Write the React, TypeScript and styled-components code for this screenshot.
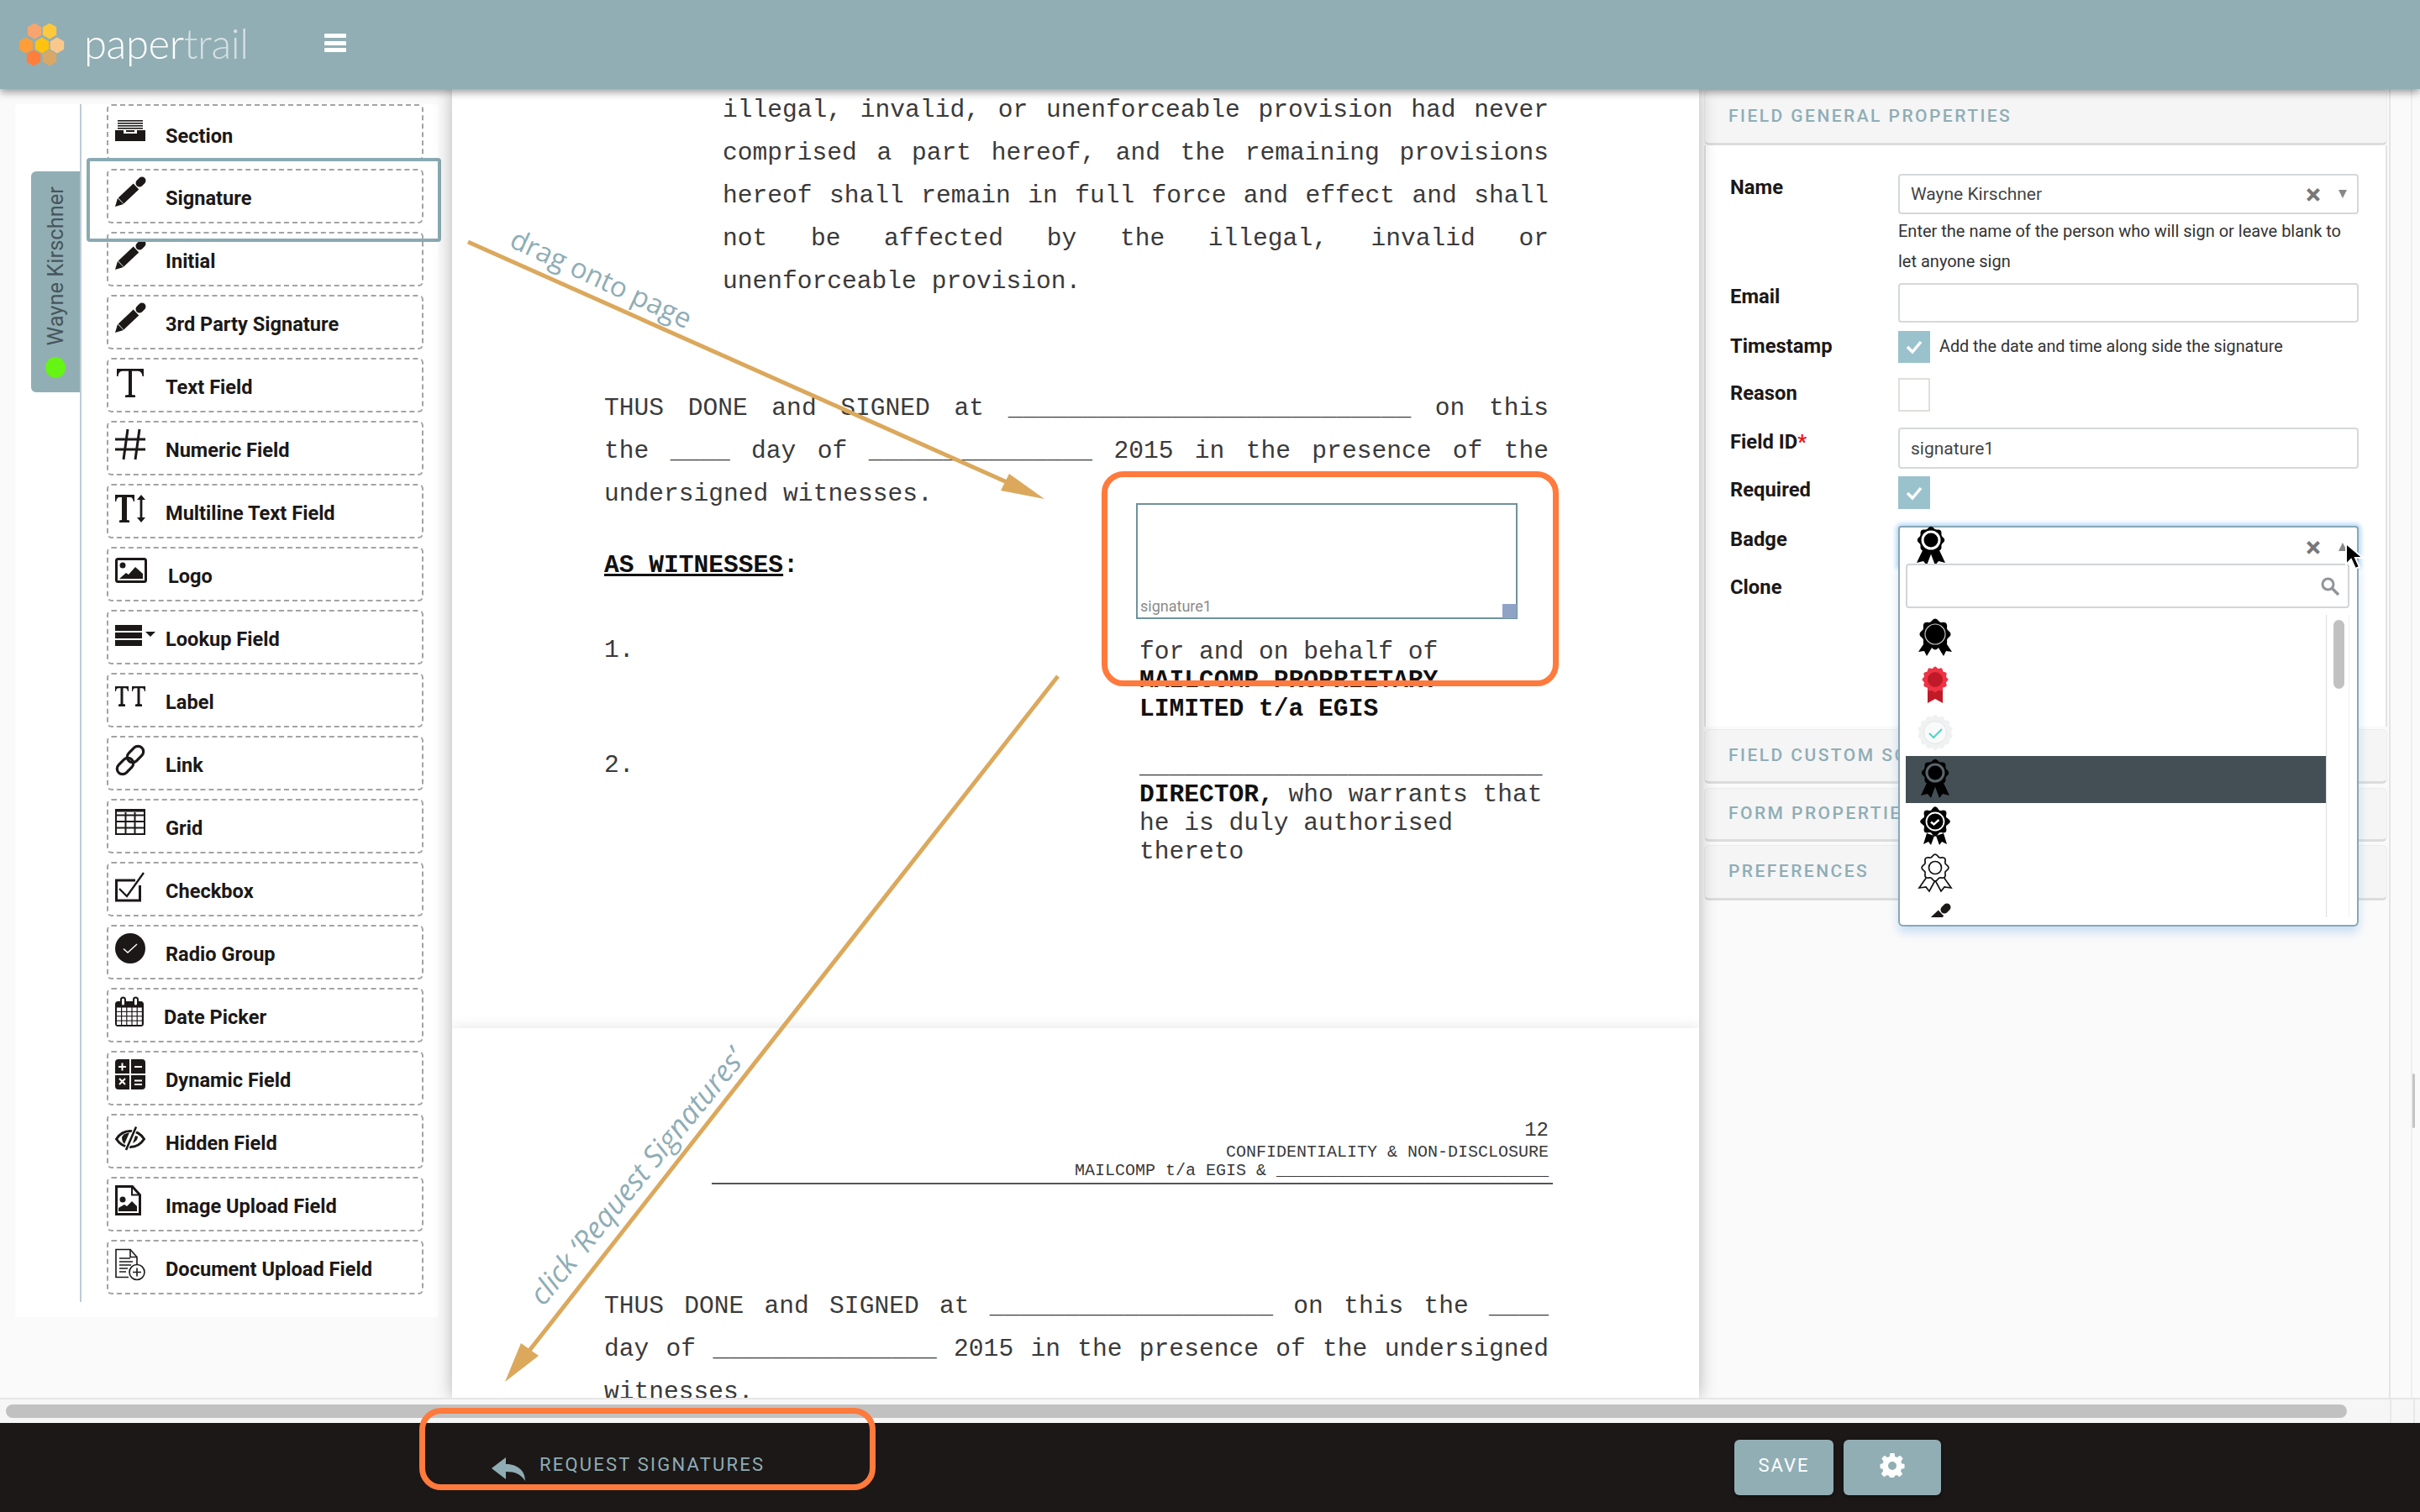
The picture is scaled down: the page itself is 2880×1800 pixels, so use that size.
import React from "react";
import styled, { createGlobalStyle } from "styled-components";

const Global = createGlobalStyle`
  html, body { margin: 0; padding: 0; background: #fafafa; }
  #root { width: 2880px; height: 1800px; overflow: hidden; }
  * { box-sizing: border-box; }
`;

const Screen = styled.div`
  position: relative;
  width: 2880px;
  height: 1800px;
  display: flex;
  flex-direction: column;
  font-family: Roboto, "Liberation Sans", sans-serif;
  background: #fafafa;
  overflow: hidden;
`;

/* ---------- header ---------- */
const Header = styled.header`
  height: 106px;
  flex: none;
  display: flex;
  align-items: flex-start;
  padding: 28px 0 0 22px;
  background: #91aeb4;
  box-shadow: 0 4px 9px rgba(0, 0, 0, 0.38);
  position: relative;
  z-index: 5;
`;
const LogoWord = styled.div`
  width: 196px;
  margin: -7px 0 0 22px;
  font-family: Lato, sans-serif;
  font-weight: 300;
  font-size: 49px;
  line-height: 60px;
  color: #fff;
  letter-spacing: -0.4px;
`;
const LogoFaint = styled.span`
  color: rgba(255, 255, 255, 0.62);
  font-weight: 300;
`;
const Burger = styled.div`
  width: 26px;
  height: 22px;
  margin: 12px 0 0 90px;
  display: flex;
  flex-direction: column;
  justify-content: space-between;
`;
const BurgerBar = styled.span`
  height: 5px;
  background: #fff;
  border-radius: 1px;
`;

/* ---------- main columns ---------- */
const Main = styled.main`
  flex: none;
  height: 1558px;
  display: flex;
`;
const Palette = styled.aside`
  width: 538px;
  flex: none;
  padding: 18px 0 0 18px;
`;
const PalettePanel = styled.div`
  position: relative;
  width: 504px;
  height: 1444px;
  background: #fff;
  border-radius: 4px;
  display: flex;
  align-items: flex-start;
`;
const RoleColumn = styled.div`
  width: 79px;
  height: 1426px;
  flex: none;
  padding: 80px 0 0 19px;
  border-right: 2px solid #bccbd6;
`;
const RoleTab = styled.div`
  width: 58px;
  height: 263px;
  padding-top: 18px;
  background: #91aeb4;
  border-radius: 6px 0 0 6px;
  display: flex;
  flex-direction: column;
  align-items: center;
  gap: 13px;
`;
const RoleName = styled.span`
  writing-mode: vertical-rl;
  transform: rotate(180deg);
  font-size: 25.500px;
  line-height: 30px;
  color: #47565c;
  white-space: nowrap;
`;
const RoleDot = styled.span`
  width: 24px;
  height: 25px;
  border-radius: 50%;
  background: #66f414;
`;
const FieldList = styled.div`
  width: 377px;
  margin-left: 30px;
  display: flex;
  flex-direction: column;
  gap: 10px;
`;
const FieldRow = styled.div<{ $first?: boolean }>`
  height: ${(p) => (p.$first ? 67 : 65)}px;
  padding: ${(p) => (p.$first ? 11 : 8)}px 0 0 8px;
  border: 2px dashed #a3a3a3;
  border-radius: 6px;
  display: flex;
  align-items: flex-start;
  background: #fff;
`;
const FieldIcon = styled.svg`
  width: 36px;
  height: 36px;
  flex: none;
  overflow: visible;
  fill: #1c1818;
`;
const FieldName = styled.span<{ $shift?: number }>`
  margin: 11px 0 0 ${(p) => 24 + (p.$shift || 0)}px;
  font-size: 23.600px;
  line-height: 28px;
  font-weight: 700;
  color: #1c1818;
`;
const DropHighlight = styled.div`
  position: absolute;
  left: 85px;
  top: 64px;
  width: 422px;
  height: 100px;
  border: 4px solid #8aaab1;
  border-radius: 4px;
`;

/* ---------- document ---------- */
const DocColumn = styled.div`
  width: 1484px;
  flex: none;
  height: 100%;
  overflow: hidden;
  position: relative;
  background: #fff;
  box-shadow: 0 0 20px rgba(0, 0, 0, 0.28);
  z-index: 1;
  font-family: "Liberation Mono", "Courier New", monospace;
  font-size: 29.600px;
  color: #3a3a3a;
`;
const PageOne = styled.section`
  height: 1118px;
  padding: 0 179px 0 181px;
`;
const PageTwo = styled.section`
  height: 440px;
  padding: 106px 179px 0 181px;
  background: #fff;
  position: relative;
  box-shadow: 0 0 16px rgba(0, 0, 0, 0.12);
`;
const Clause = styled.div<{ $indent?: number; $top?: number }>`
  margin-left: ${(p) => p.$indent || 0}px;
  margin-top: ${(p) => p.$top || 0}px;
`;
const Line = styled.div<{ $fit?: boolean }>`
  height: 51px;
  line-height: 51px;
  white-space: ${(p) => (p.$fit ? "normal" : "pre")};
  text-align: ${(p) => (p.$fit ? "justify" : "left")};
  text-align-last: ${(p) => (p.$fit ? "justify" : "left")};
`;
const Witnesses = styled.div`
  display: grid;
  grid-template-columns: 633px 491px;
`;
const Heading = styled.div`
  margin-top: 34px;
  height: 51px;
  line-height: 51px;
  font-weight: 700;
  color: #111;
`;
const HeadingRule = styled.span`
  text-decoration: underline;
  text-decoration-thickness: 3px;
`;
const Numbered = styled.div<{ $top: number }>`
  margin-top: ${(p) => p.$top}px;
  height: 51px;
  line-height: 51px;
`;
const SignatureColumn = styled.div`
  padding-top: 36px;
`;
const SignatureBox = styled.div`
  position: relative;
  width: 454px;
  height: 138px;
  border: 2px solid #6f929c;
  display: flex;
  align-items: flex-end;
  padding: 0 0 0 3px;
`;
const SignatureTag = styled.span`
  font-family: Roboto, sans-serif;
  font-size: 18px;
  line-height: 26px;
  color: #8a8a8a;
`;
const SignatureHandle = styled.span`
  position: absolute;
  right: -1px;
  bottom: -1px;
  width: 17px;
  height: 17px;
  background: #8ea3c6;
`;
const PartyLines = styled.div`
  margin-top: 22px;
  padding-left: 4px;
`;
const PartyLine = styled.div<{ $top?: number }>`
  height: 34px;
  line-height: 34px;
  white-space: pre;
  margin-top: ${(p) => p.$top || 0}px;
`;
const Strong = styled.b`
  color: #111;
`;
const Running = styled.div<{ $small?: boolean }>`
  text-align: right;
  white-space: pre;
  font-size: ${(p) => (p.$small ? 20 : 24)}px;
  height: ${(p) => (p.$small ? 22 : 31)}px;
  line-height: ${(p) => (p.$small ? 22 : 31)}px;
`;
const PageRule = styled.div`
  margin: 3px -5px 120px 128px;
  height: 2px;
  background: #555;
`;

/* ---------- properties ---------- */
const Properties = styled.div`
  flex: 1;
  display: flex;
  padding-left: 6px;
  background: #fafafa;
`;
const Accordion = styled.div`
  width: 813px;
  flex: none;
  display: flex;
  flex-direction: column;
`;
const AccordionHead = styled.div<{ $h: number; $gap?: number }>`
  height: ${(p) => p.$h}px;
  margin-top: ${(p) => p.$gap || 0}px;
  flex: none;
  padding: 0 0 2px 28px;
  display: flex;
  align-items: center;
  background: #f5f5f5;
  border: 1px solid #ececec;
  border-bottom: 3px solid #dcdcdc;
  border-radius: 6px;
  color: #8fadb5;
  font-size: 21px;
  font-weight: 500;
  letter-spacing: 2.450px;
  white-space: nowrap;
`;
const AccordionBody = styled.div`
  height: 692px;
  flex: none;
  padding: 34px 0 0 29px;
  background: #fff;
  border-left: 2px solid #e3e3e3;
  border-right: 2px solid #e3e3e3;
  display: flex;
  flex-direction: column;
`;
const PropRow = styled.div<{ $gap?: number }>`
  display: grid;
  grid-template-columns: 200px 548px;
  margin-top: ${(p) => p.$gap || 0}px;
`;
const PropLabel = styled.div<{ $top: number }>`
  margin-top: ${(p) => p.$top}px;
  font-size: 23.800px;
  line-height: 28px;
  font-weight: 700;
  color: #1c1818;
`;
const Required = styled.span`
  color: #ee1111;
`;
const TextBox = styled.div<{ $h: number }>`
  height: ${(p) => p.$h}px;
  padding-left: 13px;
  border: 2px solid #d5d8da;
  border-radius: 4px;
  background: #fff;
  display: flex;
  align-items: center;
  font-size: 21px;
  color: #444;
`;
const SelectText = styled.span`
  flex: 1;
  font-size: 21px;
  color: #444;
`;
const ClearMark = styled.span`
  width: 30px;
  margin-right: 9px;
  font-size: 34px;
  font-weight: 700;
  line-height: 28px;
  color: #777;
  text-align: center;
`;
const Caret = styled.span<{ $up?: boolean }>`
  width: 0;
  height: 0;
  margin: 0 12px 0 6px;
  border-left: 5px solid transparent;
  border-right: 5px solid transparent;
  ${(p) => (p.$up ? "border-bottom: 10px solid #888;" : "border-top: 10px solid #888;")}
`;
const HelpText = styled.div`
  max-width: 532px;
  margin-top: 2px;
  font-size: 20px;
  line-height: 36px;
  color: #333;
`;
const CheckLine = styled.div`
  display: flex;
  align-items: flex-start;
  gap: 11px;
  font-size: 19.800px;
  line-height: 38px;
  color: #333;
`;
const CheckSquare = styled.span<{ $on?: boolean; $h?: number }>`
  width: 38px;
  height: ${(p) => p.$h || 38}px;
  flex: none;
  display: flex;
  align-items: center;
  justify-content: center;
  background: ${(p) => (p.$on ? "#9ac2cd" : "#fff")};
  border: ${(p) => (p.$on ? "none" : "2px solid #e0dfdc")};
`;
const BadgeField = styled.div`
  position: relative;
  height: 48px;
  padding-left: 16px;
  display: flex;
  align-items: center;
  background: #fff;
  border: 2px solid #89a8b5;
  border-bottom: none;
  border-radius: 4px 4px 0 0;
  box-shadow: 0 0 5px 3px #b9daf9;
  z-index: 3;
`;
const BadgeSlot = styled.span`
  flex: 1;
  height: 44px;
`;
const Dropdown = styled.div`
  position: absolute;
  left: -2px;
  right: -2px;
  top: 43px;
  height: 432px;
  padding: 0 9px 0 7px;
  background: #fff;
  border: 2px solid #89a8b5;
  border-top: none;
  border-radius: 0 0 6px 6px;
  box-shadow: 0 7px 12px rgba(120, 175, 235, 0.38);
`;
const SearchBox = styled.div`
  height: 53px;
  padding-right: 9px;
  border: 2px solid #d2d5d8;
  border-radius: 4px;
  display: flex;
  align-items: center;
  justify-content: flex-end;
  background: #fff;
`;
const ListFrame = styled.div`
  height: 360px;
  margin-top: 8px;
  display: flex;
  overflow: hidden;
`;
const Options = styled.div`
  width: 500px;
  flex: none;
`;
const Option = styled.div<{ $active?: boolean }>`
  height: 56px;
  padding: 6px 0 0 14px;
  background: ${(p) => (p.$active ? "#434f54" : "#fff")};
  overflow: hidden;
`;
const ListScroll = styled.div`
  width: 29px;
  padding: 6px 5px 0 8px;
  border-left: 1px solid #dddddd;
  border-right: 1px solid #f0f0f0;
`;
const ListThumb = styled.div`
  height: 82px;
  background: #c1c1c1;
  border-radius: 8px;
`;
const Gutter = styled.div`
  flex: 1;
  margin-left: 2px;
  display: flex;
`;
const GutterLane = styled.div`
  width: 28px;
  border-left: 2px solid #e5e5e5;
  border-right: 2px solid #efefef;
`;
const GutterThumb = styled.div`
  width: 3px;
  height: 65px;
  margin-top: 1172px;
  background: #c4c4c4;
  border-radius: 2px;
`;

/* ---------- bottom ---------- */
const ScrollTrack = styled.div`
  height: 30px;
  flex: none;
  display: flex;
  background: #f6f6f6;
  border-top: 2px solid #e6e6e6;
  position: relative;
  z-index: 2;
`;
const ScrollLane = styled.div`
  flex: 1;
  padding: 6px 51px 0 7px;
`;
const ScrollThumb = styled.div`
  height: 16px;
  background: #c1c1c1;
  border-radius: 8px;
`;
const ScrollCell = styled.div<{ $w: number }>`
  width: ${(p) => p.$w}px;
  border-left: 2px solid #e8e8e8;
`;
const Footer = styled.footer`
  height: 106px;
  flex: none;
  display: flex;
  align-items: flex-start;
  padding-left: 585px;
  background: #1c1818;
  position: relative;
  z-index: 2;
`;
const RequestLink = styled.div`
  width: 1479px;
  height: 100px;
  display: flex;
  align-items: flex-start;
  gap: 17px;
  padding-top: 38px;
  color: #8fadb5;
  font-size: 22px;
  line-height: 24px;
  letter-spacing: 2.200px;
`;
const ActionButton = styled.div<{ $w: number; $gap?: number }>`
  width: ${(p) => p.$w}px;
  height: 66px;
  margin: 20px 0 0 ${(p) => p.$gap || 0}px;
  padding-bottom: 6px;
  background: #91aeb4;
  border-radius: 6px;
  display: flex;
  align-items: center;
  justify-content: center;
  color: #fff;
  font-size: 22px;
  letter-spacing: 2px;
  box-shadow: 0 2px 4px rgba(0, 0, 0, 0.4);
`;

/* ---------- annotation layer ---------- */
const AnnotationLayer = styled.svg`
  position: absolute;
  left: 0;
  top: 0;
  width: 2880px;
  height: 1800px;
  z-index: 6;
  pointer-events: none;
`;
const OrangeFrame = styled.div<{ $x: number; $y: number; $w: number; $h: number }>`
  position: absolute;
  left: ${(p) => p.$x}px;
  top: ${(p) => p.$y}px;
  width: ${(p) => p.$w}px;
  height: ${(p) => p.$h}px;
  border: 7px solid #ff7a3c;
  border-radius: 26px;
  z-index: 6;
`;
const Note = styled.span<{ $x: number; $y: number; $deg: number; $italic?: boolean }>`
  position: absolute;
  left: ${(p) => p.$x}px;
  top: ${(p) => p.$y}px;
  transform: translate(-50%, -50%) rotate(${(p) => p.$deg}deg);
  font-family: "Open Sans", sans-serif;
  font-size: ${(p) => (p.$italic ? 35 : 33)}px;
  font-style: ${(p) => (p.$italic ? "italic" : "normal")};
  font-weight: 400;
  color: #8fadb5;
  white-space: nowrap;
  z-index: 6;
`;
const MouseCursor = styled.svg`
  position: absolute;
  left: 2790px;
  top: 645px;
  width: 24px;
  height: 34px;
  z-index: 7;
`;

/* ---------- icons ---------- */
const Pencil = () => (
  <>
    <path d="M0 35l3-10 7 7z" />
    <line x1="7" y1="28" x2="25" y2="11" stroke="#1c1818" strokeWidth="9.5" />
    <line x1="29" y1="7" x2="32" y2="4" stroke="#1c1818" strokeWidth="9" strokeLinecap="round" />
  </>
);

const icons: Record<string, React.ReactNode> = {
  section: (
    <>
      {[6, 9, 12, 15].map((y) => (
        <rect key={y} x="3" y={y} width="30" height="1.6" />
      ))}
      <path d="M0 18h10v4h16v-4h10v13H0z" />
      <rect x="13" y="18" width="10" height="2" />
    </>
  ),
  pen: <Pencil />,
  text: <path d="M2 3h32v9h-1.5c-.5-4-2-6-5-6.2H20V34l4 .6V37H12v-2.4l4-.6V5.800H8.500c-3 .2-4.500 2.200-5 6.200H2z" />,
  num: (
    <g stroke="#1c1818" strokeWidth="3" fill="none">
      <path d="M15 0l-5 36M29 0l-5 36M0 12h36M0 24h36" />
    </g>
  ),
  multi: (
    <>
      <path d="M0 3h23v8h-1.200c-.4-3-1.500-5-3.800-5h-4v27l3 .6V36H5v-2.400l3-.6V6H5c-2.300 0-3.400 2-3.800 5H0z" />
      <path d="M31 3l5 6h-3.600v21H36l-5 6-5-6h3.600V9H26z" />
    </>
  ),
  logo: (
    <>
      <rect x="1.500" y="4.500" width="35" height="27" rx="2" fill="none" stroke="#1c1818" strokeWidth="3" />
      <circle cx="9" cy="12" r="3.500" />
      <path d="M5 28l8-7 3 2 8-9 9 8v6z" />
    </>
  ),
  lookup: (
    <>
      <rect x="0" y="8" width="32" height="7" />
      <rect x="0" y="17" width="32" height="7" />
      <rect x="0" y="26" width="32" height="7" />
      <path d="M36 16h12l-6 6z" />
    </>
  ),
  label: (
    <>
      <path d="M0 6h16v6h-1c-.4-2.500-1-3.700-3-3.700H9.500V27l2.500.6V30H4v-2.400l2.500-.6V8.300H4c-2 0-2.600 1.200-3 3.700H0z" />
      <path d="M20 6h16v6h-1c-.4-2.500-1-3.700-3-3.700h-2.500V27l2.500.6V30h-8v-2.400l2.500-.6V8.300H24c-2 0-2.600 1.200-3 3.700h-1z" />
    </>
  ),
  link: (
    <g fill="none" stroke="#1c1818" strokeWidth="3.200">
      <rect x="13" y="5.500" width="22" height="13" rx="6.500" transform="rotate(-45 24 12)" />
      <rect x="1" y="19.500" width="22" height="13" rx="6.500" transform="rotate(-45 12 26)" />
    </g>
  ),
  grid: (
    <g fill="none" stroke="#1c1818" strokeWidth="2">
      <rect x="1" y="3" width="34" height="29" />
      <path d="M12.500 6v26M23.500 6v26M1 9.500h34M1 17h34M1 24.500h34" />
      <rect x="1" y="3" width="34" height="1.500" fill="#1c1818" />
    </g>
  ),
  check: (
    <g fill="none" stroke="#1c1818">
      <path d="M24 12H1.500v24h28V18" strokeWidth="3" />
      <path d="M5 22l9 9L34 3" strokeWidth="2.400" />
    </g>
  ),
  radio: (
    <>
      <circle cx="18" cy="18" r="18" />
      <path d="M10 18.500l5 4.500 11-10" fill="none" stroke="#fff" strokeWidth="1.400" />
    </>
  ),
  date: (
    <>
      <path d="M3 6h3V4a3.500 3.500 0 0 1 7 0v2h8V4a3.500 3.500 0 0 1 7 0v2h3c1.500 0 3 1.500 3 3v24c0 2-1.500 3-3 3H3c-1.500 0-3-1-3-3V9c0-1.500 1.500-3 3-3z" />
      <rect x="8" y="2.500" width="3" height="8" rx="1.500" fill="#fff" />
      <rect x="23" y="2.500" width="3" height="8" rx="1.500" fill="#fff" />
      {[0, 1, 2, 3].map((r) =>
        [0, 1, 2, 3, 4].map((c) => (
          <rect key={`${r}-${c}`} x={2 + c * 6.2} y={13.500 + r * 5.400} width="5" height="4.300" fill="#fff" />
        ))
      )}
    </>
  ),
  calc: (
    <>
      <path d="M4 0h13v17H0V4a4 4 0 0 1 4-4zM19 0h13a4 4 0 0 1 4 4v13H19zM0 19h17v17H4a4 4 0 0 1-4-4zM19 19h17v13a4 4 0 0 1-4 4H19z" />
      <g stroke="#fff" strokeWidth="2" fill="none">
        <path d="M4 9h9M8.500 4.500v9M23 9h9M5 23l7 7M12 23l-7 7M23 25.500h9M23 30h9" />
      </g>
    </>
  ),
  eye: (
    <>
      <path d="M1.500 20C6 13 11 10.500 18 10.500S30 13 34.500 20C30 27 25 29.500 18 29.500S6 27 1.500 20z" fill="none" stroke="#1c1818" strokeWidth="3" />
      <path d="M8 18c1-3 4-5 9-5.500L11 26c-2-2-3-5-3-8z" />
      <path d="M25 5.500L13 33" stroke="#fff" strokeWidth="5" fill="none" />
      <path d="M25 5.500L13 33" stroke="#1c1818" strokeWidth="2.600" fill="none" />
      <path d="M27 17c0 3-2 6-6 8l3-9z" />
    </>
  ),
  fileimg: (
    <>
      <path d="M1.500 1.500h19l9 10v23h-28z" fill="none" stroke="#1c1818" strokeWidth="3" />
      <path d="M20 1.500v10h9.500" fill="none" stroke="#1c1818" strokeWidth="2" />
      <circle cx="9" cy="17" r="3.500" />
      <path d="M4 31v-4l7-4 3 2 6-6 6 6v6z" />
    </>
  ),
  fileplus: (
    <g fill="none" stroke="#1c1818" strokeWidth="1.600">
      <path d="M16 34.500H1V1.500h17l8 9v11" />
      <path d="M18 1.500v9h8" />
      <path d="M5 12h13M5 16h16M5 20h14M5 24h10M5 28h8" />
      <circle cx="26" cy="28.500" r="9" fill="#fff" />
      <path d="M21 28.500h10M26 23.500v10" />
    </g>
  ),
};

const fields: { name: string; icon: string; shift?: number }[] = [
  { name: "Section", icon: "section" },
  { name: "Signature", icon: "pen" },
  { name: "Initial", icon: "pen" },
  { name: "3rd Party Signature", icon: "pen" },
  { name: "Text Field", icon: "text" },
  { name: "Numeric Field", icon: "num" },
  { name: "Multiline Text Field", icon: "multi" },
  { name: "Logo", icon: "logo", shift: 3 },
  { name: "Lookup Field", icon: "lookup" },
  { name: "Label", icon: "label" },
  { name: "Link", icon: "link" },
  { name: "Grid", icon: "grid" },
  { name: "Checkbox", icon: "check" },
  { name: "Radio Group", icon: "radio" },
  { name: "Date Picker", icon: "date", shift: -2 },
  { name: "Dynamic Field", icon: "calc" },
  { name: "Hidden Field", icon: "eye" },
  { name: "Image Upload Field", icon: "fileimg" },
  { name: "Document Upload Field", icon: "fileplus" },
];

function scallop(cx: number, cy: number, r: number, n: number, d: number) {
  const pts: string[] = [];
  for (let i = 0; i < 120; i++) {
    const t = (i / 120) * Math.PI * 2;
    const q = r + d * Math.cos(n * t);
    pts.push(`${(cx + q * Math.sin(t)).toFixed(2)},${(cy - q * Math.cos(t)).toFixed(2)}`);
  }
  return pts.join(" ");
}

const BadgeSvg = styled.svg`
  width: 42px;
  height: 44px;
  display: block;
  overflow: visible;
`;

type BadgeKind = "solid" | "red" | "mint" | "ribbon" | "ribbonWhite" | "tick" | "outline";

const Badge = ({ kind }: { kind: BadgeKind }) => (
  <BadgeSvg viewBox="0 0 42 44">
    {kind === "solid" && (
      <>
        <path d="M9 26L1 38l7-1 3 6 8-13zM33 26l8 12-7-1-3 6-8-13z" />
        <polygon points={scallop(21, 17, 17, 8, 1.5)} />
        <circle cx="21" cy="17" r="12" fill="none" stroke="#c8c8c8" strokeWidth="1.200" />
      </>
    )}
    {kind === "red" && (
      <>
        <path d="M12 22h18v21l-9-5-9 5z" fill="#c01a28" />
        <polygon points={scallop(21, 15, 14.500, 12, 1)} fill="#ee3344" />
        <circle cx="21" cy="15" r="9" fill="#bf1a28" />
      </>
    )}
    {kind === "mint" && (
      <>
        <polygon points={scallop(21, 22, 20, 14, 1.2)} fill="#f0f2f2" />
        <circle cx="21" cy="22" r="13.500" fill="#f9fafa" stroke="#dfe7e7" strokeWidth="1" />
        <path d="M14 23l5 5 10-10" fill="none" stroke="#4fd8c4" strokeWidth="2.200" />
      </>
    )}
    {(kind === "ribbon" || kind === "ribbonWhite") && (
      <>
        <path d="M12 24L4 41l8-2 4 5 6-16zM30 24l8 17-8-2-4 5-6-16z" />
        <polygon points={scallop(21, 14, 15, 8, 1.2)} />
        <circle cx="21" cy="14" r="10" fill="none" stroke={kind === "ribbon" ? "#59666b" : "#fff"} strokeWidth="3" />
        {kind === "ribbonWhite" && <circle cx="21" cy="14" r="7" />}
      </>
    )}
    {kind === "tick" && (
      <>
        <path d="M11 30l-4 13 6-3 3 4 4-11zM31 30l4 13-6-3-3 4-4-11z" />
        <polygon points={scallop(21, 16, 16, 8, 1.8)} />
        <circle cx="21" cy="16" r="10.500" fill="none" stroke="#fff" strokeWidth="1.800" />
        <path d="M16 16.500l3.500 3 6-5.500" fill="none" stroke="#fff" strokeWidth="2.400" />
      </>
    )}
    {kind === "outline" && (
      <g fill="#fff" stroke="#111" strokeWidth="1.700">
        <path d="M11 26L2 39l8-1 4 5 7-13 7 13 4-5 8 1-9-13z" />
        <polygon points={scallop(21, 15, 14.500, 8, 1.4)} />
        <circle cx="21" cy="15" r="7.500" />
      </g>
    )}
  </BadgeSvg>
);

const Tick = () => (
  <svg width="22" height="20" viewBox="0 0 22 20">
    <path d="M3 10l6 6L19 4" fill="none" stroke="#fff" strokeWidth="3.500" />
  </svg>
);

const hexes: [number, number, string][] = [
  [19, 9, "#f8a46e"],
  [37, 9, "#fcc83c"],
  [9, 26, "#ff9d3b"],
  [28, 26, "#ffc20e"],
  [46, 26, "#fbc88c"],
  [18, 41, "#ff7f3a"],
  [37, 41, "#d9a866"],
];
const hexPoints = (x: number, y: number, r: number) =>
  [0, 1, 2, 3, 4, 5]
    .map((i) => {
      const t = (Math.PI / 3) * i;
      return `${(x + r * Math.sin(t)).toFixed(1)},${(y - r * Math.cos(t)).toFixed(1)}`;
    })
    .join(" ");

export default function App() {
  return (
    <Screen>
      <Global />
      <Header>
        <svg width="56" height="52" viewBox="0 0 56 52" style={{ flex: "none" }}>
          {hexes.map(([x, y, c]) => (
            <polygon key={`${x}-${y}`} points={hexPoints(x, y, 9.5)} fill={c} />
          ))}
        </svg>
        <LogoWord>
          paper<LogoFaint>trail</LogoFaint>
        </LogoWord>
        <Burger>
          <BurgerBar />
          <BurgerBar />
          <BurgerBar />
        </Burger>
      </Header>

      <Main>
        <Palette>
          <PalettePanel>
            <RoleColumn>
              <RoleTab>
                <RoleName>Wayne Kirschner</RoleName>
                <RoleDot />
              </RoleTab>
            </RoleColumn>
            <FieldList>
              {fields.map((f, i) => (
                <FieldRow key={f.name} $first={i === 0}>
                  <FieldIcon viewBox="0 0 36 36">{icons[f.icon]}</FieldIcon>
                  <FieldName $shift={f.shift}>{f.name}</FieldName>
                </FieldRow>
              ))}
            </FieldList>
            <DropHighlight />
          </PalettePanel>
        </Palette>

        <DocColumn>
          <PageOne>
            <Clause $indent={141}>
              <Line $fit>illegal, invalid, or unenforceable provision had never</Line>
              <Line $fit>comprised a part hereof, and the remaining provisions</Line>
              <Line $fit>hereof shall remain in full force and effect and shall</Line>
              <Line $fit>not be affected by the illegal, invalid or</Line>
              <Line>unenforceable provision.</Line>
            </Clause>
            <Clause $top={100}>
              <Line $fit>THUS DONE and SIGNED at ___________________________ on this</Line>
              <Line $fit>the ____ day of _______________ 2015 in the presence of the</Line>
            </Clause>
            <Witnesses>
              <div>
                <Line>undersigned witnesses.</Line>
                <Heading>
                  <HeadingRule>AS WITNESSES</HeadingRule>:
                </Heading>
                <Numbered $top={50}>1.</Numbered>
                <Numbered $top={86}>2.</Numbered>
              </div>
              <SignatureColumn>
                <SignatureBox>
                  <SignatureTag>signature1</SignatureTag>
                  <SignatureHandle />
                </SignatureBox>
                <PartyLines>
                  <PartyLine>for and on behalf of</PartyLine>
                  <PartyLine>
                    <Strong>MAILCOMP PROPRIETARY</Strong>
                  </PartyLine>
                  <PartyLine>
                    <Strong>LIMITED t/a EGIS</Strong>
                  </PartyLine>
                  <PartyLine $top={34}>___________________________</PartyLine>
                  <PartyLine>
                    <Strong>DIRECTOR,</Strong> who warrants that
                  </PartyLine>
                  <PartyLine>he is duly authorised</PartyLine>
                  <PartyLine>thereto</PartyLine>
                </PartyLines>
              </SignatureColumn>
            </Witnesses>
          </PageOne>
          <PageTwo>
            <Running>12</Running>
            <Running $small>CONFIDENTIALITY &amp; NON-DISCLOSURE</Running>
            <Running $small>MAILCOMP t/a EGIS &amp; ___________________________</Running>
            <PageRule />
            <Line $fit>THUS DONE and SIGNED at ___________________ on this the ____</Line>
            <Line $fit>day of _______________ 2015 in the presence of the undersigned</Line>
            <Line>witnesses.</Line>
          </PageTwo>
        </DocColumn>

        <Properties>
          <Accordion>
            <AccordionHead $h={67}>FIELD GENERAL PROPERTIES</AccordionHead>
            <AccordionBody>
              <PropRow>
                <PropLabel $top={2}>Name</PropLabel>
                <div>
                  <TextBox $h={48}>
                    <SelectText>Wayne Kirschner</SelectText>
                    <ClearMark>×</ClearMark>
                    <Caret />
                  </TextBox>
                  <HelpText>Enter the name of the person who will sign or leave blank to let anyone sign</HelpText>
                </div>
              </PropRow>
              <PropRow $gap={8}>
                <PropLabel $top={2}>Email</PropLabel>
                <TextBox $h={47} />
              </PropRow>
              <PropRow $gap={10}>
                <PropLabel $top={4}>Timestamp</PropLabel>
                <CheckLine>
                  <CheckSquare $on>
                    <Tick />
                  </CheckSquare>
                  Add the date and time along side the signature
                </CheckLine>
              </PropRow>
              <PropRow $gap={18}>
                <PropLabel $top={4}>Reason</PropLabel>
                <CheckLine>
                  <CheckSquare $h={40} />
                </CheckLine>
              </PropRow>
              <PropRow $gap={19}>
                <PropLabel $top={3}>Field ID<Required>*</Required></PropLabel>
                <TextBox $h={49}>signature1</TextBox>
              </PropRow>
              <PropRow $gap={9}>
                <PropLabel $top={2}>Required</PropLabel>
                <CheckLine>
                  <CheckSquare $on $h={39}>
                    <Tick />
                  </CheckSquare>
                </CheckLine>
              </PropRow>
              <PropRow $gap={20}>
                <PropLabel $top={2}>Badge</PropLabel>
                <BadgeField>
                  <BadgeSlot>
                    <Badge kind="ribbonWhite" />
                  </BadgeSlot>
                  <ClearMark>×</ClearMark>
                  <Caret $up />
                  <Dropdown>
                    <SearchBox>
                      <svg width="24" height="24" viewBox="0 0 24 24" fill="none" stroke="#8f9599" strokeWidth="3">
                        <circle cx="9.500" cy="9.500" r="6.500" />
                        <path d="M14 14l8 8" strokeWidth="3.500" />
                      </svg>
                    </SearchBox>
                    <ListFrame>
                      <Options>
                        <Option><Badge kind="solid" /></Option>
                        <Option><Badge kind="red" /></Option>
                        <Option><Badge kind="mint" /></Option>
                        <Option $active><Badge kind="ribbon" /></Option>
                        <Option><Badge kind="tick" /></Option>
                        <Option><Badge kind="outline" /></Option>
                        <Option>
                          <FieldIcon viewBox="0 0 36 36" style={{ marginTop: 2, marginLeft: 3 }}>
                            <Pencil />
                          </FieldIcon>
                        </Option>
                      </Options>
                      <ListScroll>
                        <ListThumb />
                      </ListScroll>
                    </ListFrame>
                  </Dropdown>
                </BadgeField>
              </PropRow>
              <PropRow $gap={11}>
                <PropLabel $top={0}>Clone</PropLabel>
              </PropRow>
            </AccordionBody>
            <AccordionHead $h={65} $gap={3}>FIELD CUSTOM SCRIPT</AccordionHead>
            <AccordionHead $h={64} $gap={5}>FORM PROPERTIES</AccordionHead>
            <AccordionHead $h={66} $gap={4}>PREFERENCES</AccordionHead>
          </Accordion>
          <Gutter>
            <GutterLane />
            <GutterThumb />
          </Gutter>
        </Properties>
      </Main>

      <ScrollTrack>
        <ScrollLane>
          <ScrollThumb />
        </ScrollLane>
        <ScrollCell $w={28} />
        <ScrollCell $w={8} />
      </ScrollTrack>

      <Footer>
        <RequestLink>
          <svg width="40" height="28" viewBox="0 0 40 28" fill="#8fadb5" style={{ flex: "none", marginTop: 3 }}>
            <path d="M0 13L17 0v8c13 0 23 7 23 20-5-8-12-11-23-11v9z" />
          </svg>
          REQUEST SIGNATURES
        </RequestLink>
        <ActionButton $w={118}>SAVE</ActionButton>
        <ActionButton $w={116} $gap={12}>
          <svg width="30" height="30" viewBox="0 0 30 30" fill="#fff">
            <path
              fillRule="evenodd"
              d="M12.500 1h5l.7 4 2.600 1.100 3.400-2.300 3.500 3.500-2.300 3.400L26 13.300l3.500.7v5l-3.500.7-1.100 2.600 2.300 3.400-3.500 3.500-3.400-2.300-2.600 1.100-.7 2.500h-5l-.7-2.500-2.600-1.100-3.400 2.300-3.500-3.500 2.300-3.400L3.500 19.700 .5 19v-5l3-.7 1.100-2.600-2.300-3.400 3.500-3.500 3.400 2.300L11.800 5zM15 11a5 5 0 1 0 0 10 5 5 0 0 0 0-10z"
            />
          </svg>
        </ActionButton>
      </Footer>

      <AnnotationLayer viewBox="0 0 2880 1800">
        <g stroke="#dba85c" strokeWidth="5" fill="#dba85c">
          <line x1="557" y1="288" x2="1205" y2="577" />
          <line x1="1259" y1="805" x2="622" y2="1618" />
        </g>
        <polygon points="1243,594 1191,584 1201,564" fill="#dba85c" />
        <polygon points="601,1645 620,1599 641,1614" fill="#dba85c" />
      </AnnotationLayer>
      <OrangeFrame $x={1311} $y={561} $w={544} $h={256} />
      <OrangeFrame $x={499} $y={1676} $w={543} $h={98} />
      <Note $x={716} $y={331} $deg={25}>drag onto page</Note>
      <Note $x={757} $y={1400} $deg={-50.700} $italic>click ‘Request Signatures’</Note>
      <MouseCursor viewBox="0 0 24 34">
        <path d="M2 2v25l6-6 5 11 5-2-5-11h9z" fill="#000" stroke="#fff" strokeWidth="2" />
      </MouseCursor>
    </Screen>
  );
}
